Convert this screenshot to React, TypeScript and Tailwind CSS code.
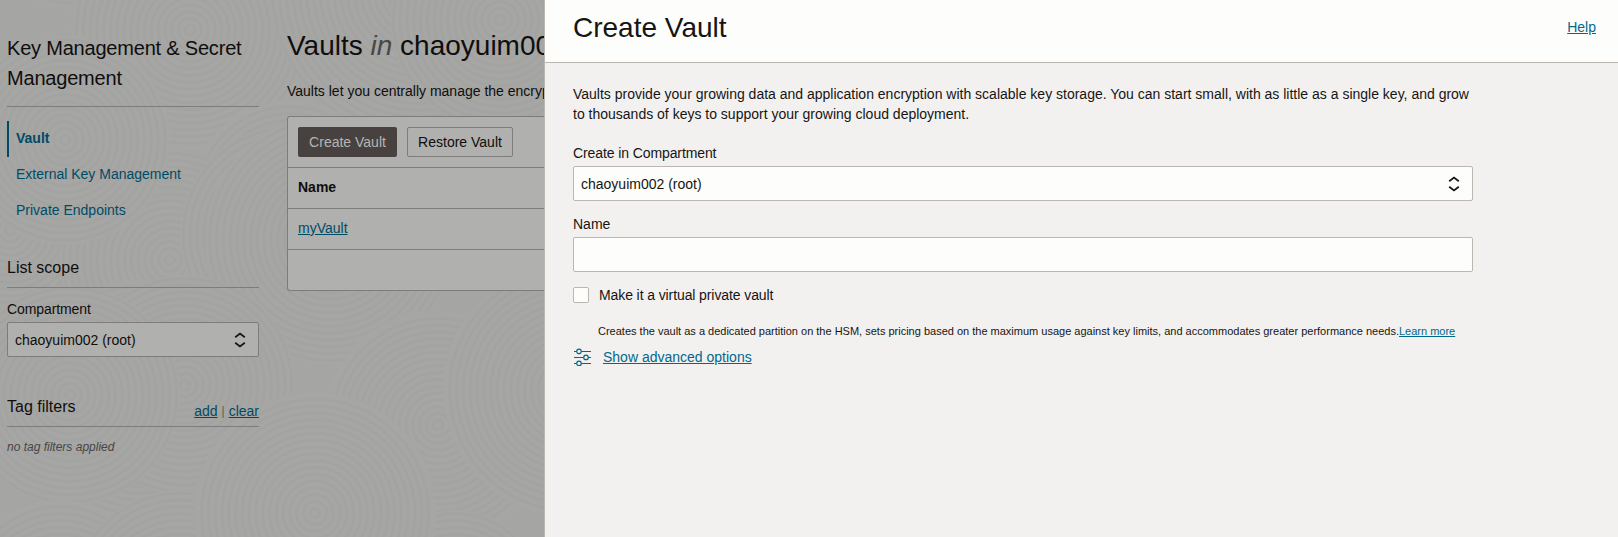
import React from "react";

const discs: [number, number, number][] = [
  [70, -70, 80],
  [190, 30, 120],
  [420, -10, 150],
  [500, 20, 110],
  [10, 230, 130],
  [290, 200, 100],
  [170, 260, 110],
  [65, 140, 105],
  [290, 235, 110],
  [330, 240, 125],
  [140, 400, 120],
  [185, 385, 110],
  [70, 395, 110],
  [438, 425, 115],
  [570, 390, 127],
  [60, 600, 100],
  [180, 600, 110],
  [455, 600, 90],
  [315, 513, 121],
];

function Texture() {
  return (
    <svg className="absolute inset-0" width="544" height="537" viewBox="0 0 544 537" aria-hidden="true">
      <rect width="544" height="537" fill="#a5a5a3" />
      {discs.map(([x, y, r], i) => (
        <g key={i} fill="none" stroke="#a3a3a1" strokeWidth="2.6">
          <circle cx={x} cy={y} r={r} fill="#a6a6a4" stroke="none" />
          {Array.from({ length: Math.floor(r / 6.8) }, (_, k) => (
            <circle key={k} cx={x} cy={y} r={(k + 1) * 6.8 - 2} />
          ))}
        </g>
      ))}
    </svg>
  );
}

function Chevrons() {
  return (
    <svg width="12" height="16" viewBox="0 0 12 16" fill="none" stroke="#161513" strokeWidth="1.8" aria-hidden="true">
      <path d="M1.2 5.2 6 1.6l4.8 3.6M1.2 10.8 6 14.4l4.8-3.6" />
    </svg>
  );
}

function SlidersIcon() {
  return (
    <svg width="18" height="18" viewBox="0 0 18 18" fill="none" stroke="#00688c" aria-hidden="true">
      <path d="M1 3.5h2.5M8.5 3.5H18M1 9.5h9M15 9.5h3M1 15.5h2.5M8.5 15.5H18" />
      <g strokeWidth="1.2">
        <circle cx="6" cy="3.4" r="2.3" />
        <circle cx="13" cy="9.4" r="2.3" />
        <circle cx="6" cy="15.4" r="2.3" />
      </g>
    </svg>
  );
}

function Sidebar() {
  return (
    <aside className="w-[252px] shrink-0">
      <h2 className="h-[74px] border-b border-[#7f7d7b] text-[20px] leading-[30px] tracking-[-0.2px]">
        Key Management &amp; Secret
        <br />
        Management
      </h2>
      <nav className="mt-[14px] flex flex-col text-[#004b65]">
        <a className="h-9 border-l-2 border-[#004b65] pl-[7px] pt-[7px] font-bold">Vault</a>
        <a className="h-9 pl-[9px] pt-[7px]">External Key Management</a>
        <a className="h-9 pl-[9px] pt-[7px]">Private Endpoints</a>
      </nav>
      <h3 className="mt-[25px] h-[34px] border-b border-[#7f7d7b] pt-[3px] text-[16px] leading-[22px]">List scope</h3>
      <div className="mt-[11px] leading-5 tracking-[-0.1px]">Compartment</div>
      <div className="mt-[3px] flex h-[35px] items-center justify-between rounded-[2px] border border-[#7f7d7b] bg-[#b0b0ae] pl-[7px] pr-[12px]">
        <span>chaoyuim002 (root)</span>
        <Chevrons />
      </div>
      <div className="mt-[36px] flex h-[34px] justify-between border-b border-[#7f7d7b]">
        <h3 className="pt-[3px] text-[16px] leading-[22px]">Tag filters</h3>
        <div className="flex gap-1 pt-2 leading-5 text-[#004b65]">
          <a className="underline">add</a>
          <span className="text-[12px] text-[#6f5a3e]">|</span>
          <a className="underline">clear</a>
        </div>
      </div>
      <p className="mt-[10px] text-[12px] italic leading-5 text-[#484644]">no tag filters applied</p>
    </aside>
  );
}

function VaultList() {
  return (
    <main className="ml-7 min-w-0 flex-1">
      <h1 className="-mt-[5px] text-[28px] leading-[36px]">
        Vaults <em className="text-[#4a4846]">in</em> chaoyuim002
      </h1>
      <p className="mt-[17px] leading-5">Vaults let you centrally manage the encryption</p>
      <section className="mt-[15px] h-[175px] rounded-l-[3px] border border-r-0 border-[#7f7d7b] bg-[#b0b0ae]">
        <div className="flex h-[51px] gap-[10px] border-b border-[#7f7d7b] px-[10px] pt-[10px]">
          <button className="flex h-[30px] w-[99px] items-center justify-center rounded-[2px] bg-[#474140] text-[#b6b5b3]">Create Vault</button>
          <button className="flex h-[30px] w-[106px] items-center justify-center rounded-[2px] border border-[#7f7d7b]">Restore Vault</button>
        </div>
        <div className="h-[41px] border-b border-[#7f7d7b] px-[10px] pt-[9px] font-bold">Name</div>
        <div className="h-[41px] border-b border-[#7f7d7b] px-[10px] pt-[9px]">
          <a className="text-[#004b65] underline">myVault</a>
        </div>
      </section>
    </main>
  );
}

function CreateVaultDrawer() {
  return (
    <section className="flex min-w-0 flex-1 flex-col border-l border-[#bcb6b1] bg-[#f3f1f0] text-[#161513]">
      <header className="flex h-[63px] justify-between border-b border-[#bcb6b1] bg-[#fdfefc] pl-[28px] pr-[22px]">
        <h2 className="pt-[10px] text-[28px] leading-[36px]">Create Vault</h2>
        <a className="pt-[17px] leading-5 text-[#00688c] underline">Help</a>
      </header>
      <div className="w-[928px] pl-[28px] pt-[21px]">
        <p className="leading-5">
          Vaults provide your growing data and application encryption with scalable key storage. You can start small, with as little as a single key, and grow
          <br />
          to thousands of keys to support your growing cloud deployment.
        </p>
        <div className="mt-[19px] leading-5 tracking-[-0.1px]">Create in Compartment</div>
        <div className="mt-[3px] flex h-[35px] items-center justify-between rounded-[2px] border border-[#bcb6b1] bg-[#fdfefc] pl-[7px] pr-[12px]">
          <span>chaoyuim002 (root)</span>
          <Chevrons />
        </div>
        <div className="mt-[13px] leading-5">Name</div>
        <div className="mt-[3px] h-[35px] rounded-[2px] border border-[#bcb6b1] bg-[#fdfefc]" />
        <div className="mt-[13px] flex items-center leading-5">
          <span className="h-4 w-4 rounded-[2px] border border-[#bcb6b1] bg-[#fdfefc]" />
          <span className="ml-[10px] tracking-[-0.1px]">Make it a virtual private vault</span>
        </div>
        <p className="mt-[17px] pl-[25px] text-[11px] leading-[18px]">
          Creates the vault as a dedicated partition on the HSM, sets pricing based on the maximum usage against key limits, and accommodates greater performance needs.
          <a className="text-[#00688c] underline">Learn more</a>
        </p>
        <div className="mt-[7px] flex items-center leading-5">
          <SlidersIcon />
          <a className="ml-3 text-[#00688c] underline">Show advanced options</a>
        </div>
      </div>
    </section>
  );
}

export default function App() {
  return (
    <div className="flex h-[537px] w-[1618px] overflow-hidden whitespace-nowrap font-['Liberation_Sans',Arial,sans-serif] text-[14px] leading-5">
      <div className="relative w-[544px] shrink-0 overflow-hidden text-[#0f0e0d]">
        <Texture />
        <div className="relative flex pl-[7px] pt-[33px]">
          <Sidebar />
          <VaultList />
        </div>
      </div>
      <CreateVaultDrawer />
    </div>
  );
}
